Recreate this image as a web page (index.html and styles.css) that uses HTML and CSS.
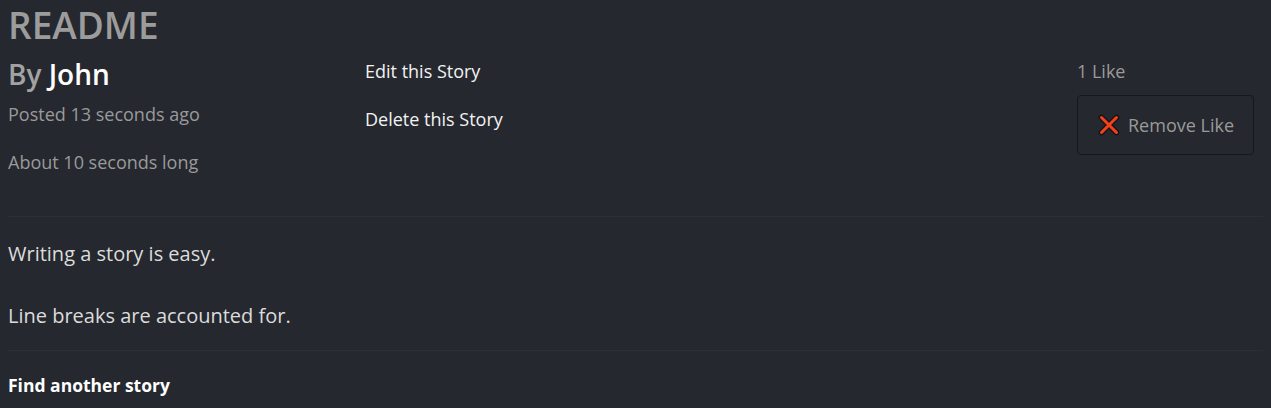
FILE: index.html
```html
<!DOCTYPE html>
<html>
<head>
<meta charset="utf-8">
<link rel="stylesheet" href="styles.css">
</head>
<body>
<h1 class="title">README</h1>
<div class="meta">
  <div class="info">
    <h3 class="author">By <span class="name">John</span></h3>
    <p class="muted">Posted 13 seconds ago</p>
    <p class="muted">About 10 seconds long</p>
  </div>
  <div class="actions">
    <a class="action" href="#">Edit this Story</a>
    <a class="action" href="#">Delete this Story</a>
  </div>
  <div class="likes">
    <div class="count">1 Like</div>
    <button class="like-btn">
      <svg class="x" width="22" height="22" viewBox="0 0 22 22">
        <path d="M3.5 3.5 L18.5 18.5 M18.5 3.5 L3.5 18.5" stroke="#141414" stroke-width="5.5" stroke-linecap="round"/>
        <path d="M3.5 3.5 L18.5 18.5 M18.5 3.5 L3.5 18.5" stroke="#f4411c" stroke-width="3" stroke-linecap="round"/>
      </svg>
      <span>Remove Like</span>
    </button>
  </div>
</div>
<hr class="rule">
<div class="story">
  <p>Writing a story is easy.</p>
  <p>Line breaks are accounted for.</p>
</div>
<hr class="rule">
<a class="find" href="#">Find another story</a>
</body>
</html>
```

FILE: styles.css
```css
html, body {
  background: #25282e;
}
body {
  margin: 0 8px;
  font-family: "Segoe UI", "Open Sans", "Noto Sans", sans-serif;
  color: #e6e6e6;
  font-size: 18px;
}
.title {
  margin: 0;
  padding-top: 2px;
  font-size: 37px;
  font-weight: 600;
  line-height: 46px;
  color: #9c9c9c;
}
.meta {
  display: grid;
  grid-template-columns: 357px 712px 177px;
  margin-top: 10px;
  margin-bottom: 18px;
}
.author {
  margin: -1px 0 10px;
  font-size: 28px;
  font-weight: 600;
  line-height: 34px;
  color: #a3a3a3;
}
.name {
  color: #ffffff;
}
.muted {
  margin: 0 0 21px;
  line-height: 27px;
  color: #9a9a9a;
}
.muted:last-child {
  margin-bottom: 22px;
}
.actions {
  display: flex;
  flex-direction: column;
  gap: 21px;
}
.action {
  color: #f2f2f2;
  text-decoration: none;
  line-height: 27px;
}
.count {
  line-height: 27px;
  color: #9a9a9a;
}
.like-btn {
  margin-top: 10px;
  width: 177px;
  height: 60px;
  background: transparent;
  border: 1px solid #15171a;
  border-radius: 4px;
  display: flex;
  align-items: center;
  justify-content: center;
  gap: 8px;
  font-family: inherit;
  font-size: 18px;
  color: #9a9a9a;
  padding: 0 0 0 1px;
}
.x {
  display: block;
}
.rule {
  border: 0;
  border-top: 1px solid #2c2f35;
  margin: 0;
}
.story {
  padding: 23px 0 21px;
}
.story p {
  margin: 0 0 35px;
  font-size: 20px;
  line-height: 27px;
  color: #dcdcdc;
}
.story p:last-child {
  margin-bottom: 0;
}
.find {
  display: block;
  margin-top: 22px;
  color: #ffffff;
  font-weight: 700;
  font-size: 17.5px;
  line-height: 24px;
  text-decoration: none;
}
```
